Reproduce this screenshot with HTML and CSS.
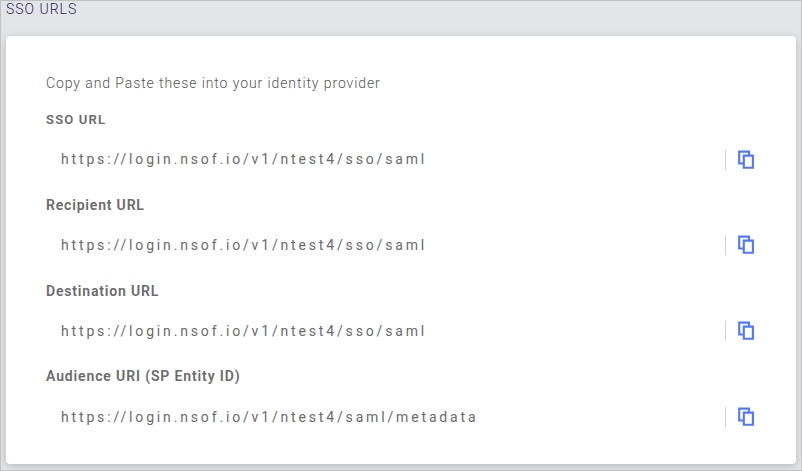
FILE: index.html
```html
<!DOCTYPE html>
<html lang="en">
<head>
<meta charset="utf-8">
<title>SSO URLs</title>
<link rel="stylesheet" href="styles.css">
</head>
<body>
<svg class="sprite" width="0" height="0"><symbol id="copy" viewBox="0 0 18 20"><path d="M5 13.5H1.2V1.6H11V5M5.8 5.6h9.1v12.1H5.8z" fill="none" stroke="currentColor" stroke-width="2.1"/></symbol></svg>
<main class="page">
<h1 class="title">SSO URLS</h1>
<section class="card">
<p class="intro">Copy and Paste these into your identity provider</p>
<div class="field"><h2 class="label label-small">SSO URL</h2><div class="row row-first"><span class="url">https://login.nsof.io/v1/ntest4/sso/saml</span><button class="copy" aria-label="Copy"><svg class="icon"><use href="#copy"/></svg></button></div></div>
<div class="field"><h2 class="label">Recipient URL</h2><div class="row"><span class="url">https://login.nsof.io/v1/ntest4/sso/saml</span><button class="copy" aria-label="Copy"><svg class="icon"><use href="#copy"/></svg></button></div></div>
<div class="field"><h2 class="label">Destination URL</h2><div class="row"><span class="url">https://login.nsof.io/v1/ntest4/sso/saml</span><button class="copy" aria-label="Copy"><svg class="icon"><use href="#copy"/></svg></button></div></div>
<div class="field"><h2 class="label label-audience">Audience URI (SP Entity ID)</h2><div class="row"><span class="url">https://login.nsof.io/v1/ntest4/saml/metadata</span><button class="copy" aria-label="Copy"><svg class="icon"><use href="#copy"/></svg></button></div></div>
</section>
</main>
</body>
</html>
```
FILE: styles.css
```css
* { box-sizing: border-box; }
body { margin: 0; font-family: Roboto, sans-serif; color: #6a6a6a; background: #e4e5e9; }
.sprite { display: block; }
.page { height: 471px; border: 1px solid #c2c2c4; padding: 0 5px; overflow: hidden; }
.title { margin: 0; height: 35px; font-size: 14px; line-height: 17px; font-weight: 300; letter-spacing: 1px; color: #2e2560; }
.card { height: 428px; padding: 37px 40px 0; background: #fff; border-radius: 4px; box-shadow: 0 2px 8px rgba(0,0,0,.2); }
.intro { margin: 0; height: 36px; font-size: 14px; line-height: 20px; font-weight: 300; letter-spacing: .91px; color: #555; }
.field { height: 86px; }
.label { margin: 0; height: 20px; font-size: 14px; line-height: 20px; font-weight: 600; letter-spacing: .82px; }
.label-small { font-size: 13px; line-height: 21px; letter-spacing: 1.2px; }
.label-audience { line-height: 19px; letter-spacing: .87px; }
.row { display: flex; align-items: center; height: 60px; padding-left: 15px; }
.url { flex: 1; font-size: 14px; line-height: 20px; letter-spacing: 2.84px; }
.copy { display: flex; align-items: center; width: 31px; height: 20px; padding: 0 0 0 12px; border: 0; border-left: 1px solid #d0d0d0; background: none; color: #5077ff; }
.row-first .copy { margin-top: 2px; }
.row-first .icon { margin-top: -1px; }
.icon { flex: none; width: 18px; height: 20px; }
```
